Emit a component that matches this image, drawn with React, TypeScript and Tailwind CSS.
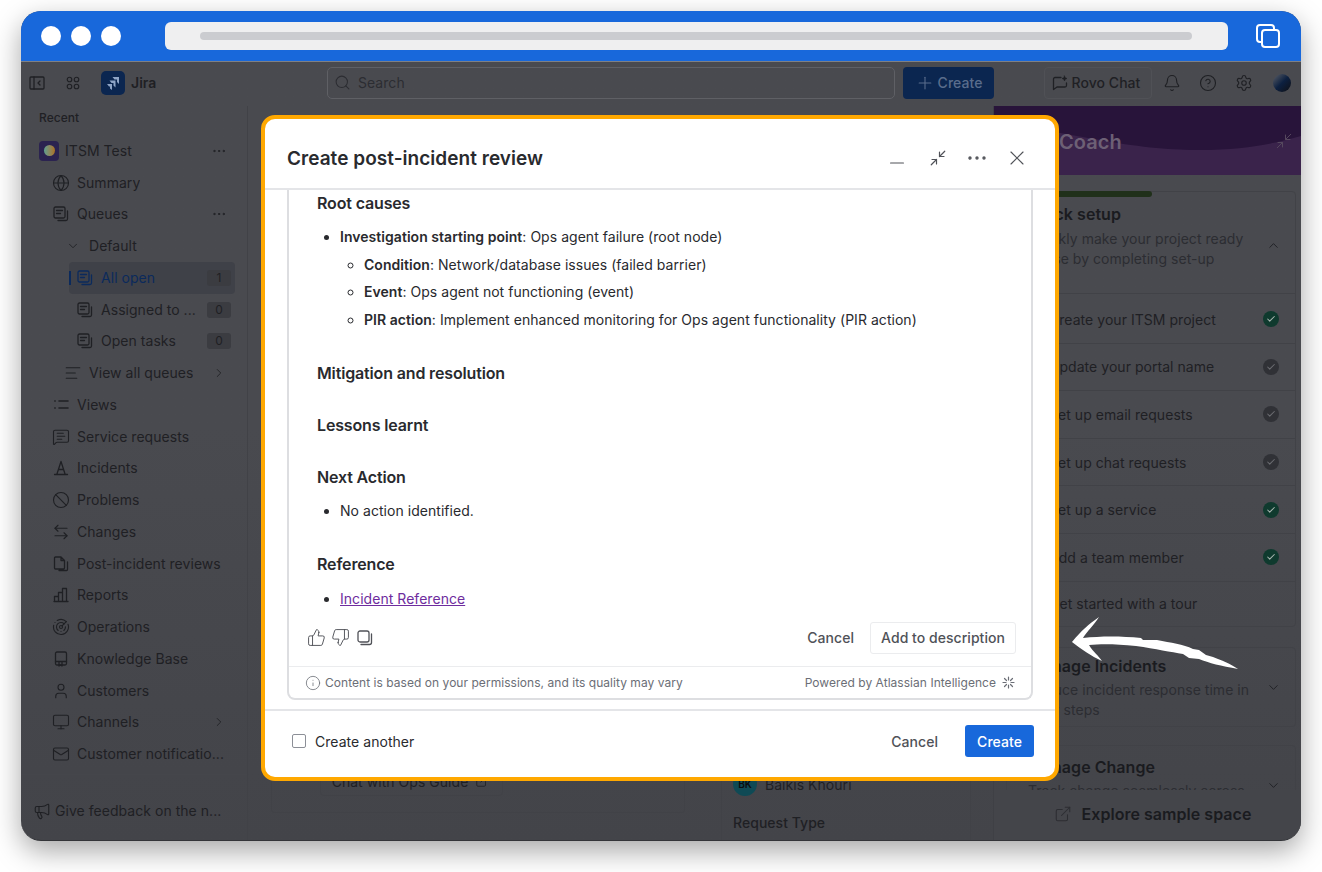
import {
  Ban,
  ArrowLeftRight,
  Bell,
  Check,
  ChevronDown,
  ChevronRight,
  ChevronUp,
  CircleHelp,
  Ellipsis,
  ExternalLink,
  Globe,
  Info,
  Mail,
  Megaphone,
  MessageSquareText,
  Minimize2,
  Minus,
  Monitor,
  Plus,
  Radar,
  Search,
  Settings,
  ThumbsDown,
  ThumbsUp,
  User,
  X,
  AlignLeft,
} from 'lucide-react';
import type { ReactNode } from 'react';

function Glyph({ children, size = 16 }: { children: ReactNode; size?: number }) {
  return (
    <svg
      className="shrink-0"
      width={size}
      height={size}
      viewBox="0 0 16 16"
      fill="none"
      stroke="currentColor"
      strokeWidth="1.3"
      strokeLinecap="round"
      strokeLinejoin="round"
    >
      {children}
    </svg>
  );
}

function QueueIcon() {
  return (
    <Glyph>
      <rect x="1" y="1" width="11" height="11" rx="1.5" />
      <path d="M3.5 4.5h6M3.5 7.5h4M14.5 5v8a1.5 1.5 0 0 1-1.5 1.5H5" />
    </Glyph>
  );
}

function Row({
  icon,
  label,
  indent = 'pl-[17px]',
  right,
  active = false,
}: {
  icon: ReactNode;
  label: string;
  indent?: string;
  right?: ReactNode;
  active?: boolean;
}) {
  return (
    <div className={`relative flex h-[31.75px] items-center ${indent} ${active ? 'text-[#0b2a5c]' : 'text-[#1f2024]'}`}>
      <span className="flex w-[16px] shrink-0 justify-center">{icon}</span>
      <span className="ml-[8px] truncate text-[14px] leading-[20px]">{label}</span>
      {right && <span className="absolute right-[4px] flex items-center">{right}</span>}
    </div>
  );
}

function Count({ n }: { n: number }) {
  return (
    <span className="flex h-[16px] w-[24px] items-center justify-center rounded-[3px] bg-[#3b3c41] text-[12px] text-[#1f2024]">
      {n}
    </span>
  );
}

function Sidebar() {
  const ic = 'size-[18px] shrink-0';
  const more = <ChevronRight className="mr-[5px] size-[14px]" strokeWidth={1.5} />;
  return (
    <aside className="flex h-full w-[227px] shrink-0 flex-col border-r border-[#414247] pl-[15px] pr-[12px]">
      <div className="flex-1">
        <div className="pl-[3px] pt-[5px] text-[12px] font-medium leading-[14px] text-[#1f2024]">Recent</div>
        <div className="mt-[10px]">
          <div className="relative flex h-[31.75px] items-center pl-[3px] text-[#1f2024]">
            <span className="flex size-[20px] items-center justify-center rounded-[4px] bg-[#2b2350]">
              <span className="size-[11px] rounded-full bg-gradient-to-r from-[#5b9d8f] to-[#a9701c]" />
            </span>
            <span className="ml-[6px] text-[14px] leading-[20px]">ITSM Test</span>
            <Ellipsis className="absolute right-[8px] size-[16px]" strokeWidth={1.5} />
          </div>
          <Row icon={<Globe className={ic} strokeWidth={1.5} />} label="Summary" />
          <Row icon={<QueueIcon />} label="Queues" right={<Ellipsis className="mr-[4px] size-[16px]" strokeWidth={1.5} />} />
          <Row icon={<ChevronDown className="size-[14px]" strokeWidth={1.5} />} label="Default" indent="pl-[29px]" />
          <div className="relative ml-[33px] rounded-[4px] bg-[#3f4148]">
            <span className="absolute left-0 top-[9px] h-[14px] w-[2px] bg-[#0b2a5c]" />
            <Row icon={<QueueIcon />} label="All open" indent="pl-[8px]" active right={<Count n={1} />} />
          </div>
          <Row icon={<QueueIcon />} label="Assigned to ..." indent="pl-[41px]" right={<Count n={0} />} />
          <Row icon={<QueueIcon />} label="Open tasks" indent="pl-[41px]" right={<Count n={0} />} />
          <Row icon={<AlignLeft className={ic} strokeWidth={1.5} />} label="View all queues" indent="pl-[29px]" right={more} />
          <Row
            icon={
              <Glyph>
                <path d="M6 4h9M6 11h9M1.8 4h.4M1.8 11h.4" strokeWidth="1.6" />
              </Glyph>
            }
            label="Views"
          />
          <Row icon={<MessageSquareText className={ic} strokeWidth={1.5} />} label="Service requests" />
          <Row
            icon={
              <Glyph>
                <path d="M8 1.5 3.8 14.5M8 1.5l4.2 13M1.5 14.5h13M5.6 9.5h4.8" />
              </Glyph>
            }
            label="Incidents"
          />
          <Row icon={<Ban className={ic} strokeWidth={1.5} />} label="Problems" />
          <Row icon={<ArrowLeftRight className={ic} strokeWidth={1.5} />} label="Changes" />
          <Row
            icon={
              <Glyph>
                <path d="M2.5 1h5.5L11.5 4.5V12a1 1 0 0 1-1 1h-8a1 1 0 0 1-1-1V2a1 1 0 0 1 1-1zM8 1v3.5h3.5M14.5 6v7.5a1 1 0 0 1-1 1H6" />
              </Glyph>
            }
            label="Post-incident reviews"
          />
          <Row
            icon={
              <Glyph>
                <path d="M1.5 14.5v-5h4v5M5.5 14.5v-9h4v9M9.5 14.5v-13h4v13M1 14.5h14" />
              </Glyph>
            }
            label="Reports"
          />
          <Row icon={<Radar className={ic} strokeWidth={1.5} />} label="Operations" />
          <Row
            icon={
              <Glyph>
                <rect x="2.5" y="1" width="11" height="13" rx="1.5" />
                <path d="M2.5 10.5h11M6 10.5v4.5l1.5-1 1.5 1v-4.5" />
              </Glyph>
            }
            label="Knowledge Base"
          />
          <Row icon={<User className={ic} strokeWidth={1.5} />} label="Customers" />
          <Row icon={<Monitor className={ic} strokeWidth={1.5} />} label="Channels" right={more} />
          <Row icon={<Mail className={ic} strokeWidth={1.5} />} label="Customer notificatio..." />
        </div>
      </div>
      <div className="-ml-[15px] -mr-[12px] flex h-[66px] items-center border-t border-[#45464b] pl-[12px] pt-[6px] text-[14px] text-[#1f2024]">
        <Megaphone className="size-[18px] shrink-0" strokeWidth={1.5} />
        <span className="ml-[4px] truncate">Give feedback on the n...</span>
      </div>
    </aside>
  );
}

function Header() {
  const ic = 'size-[18px] shrink-0';
  return (
    <header className="flex h-[45px] shrink-0 items-center border-t border-[#7f8084] pb-[3px] pl-[8px] text-[#1f2024]">
      <Glyph>
        <rect x="1" y="2" width="14" height="12" rx="1" />
        <path d="M5 2v12M11 6 9 8l2 2" />
      </Glyph>
      <span className="ml-[21px]">
        <Glyph size={14}>
          <circle cx="4" cy="4" r="2.6" />
          <circle cx="12" cy="4" r="2.6" />
          <circle cx="4" cy="12" r="2.6" />
          <circle cx="12" cy="12" r="2.6" />
        </Glyph>
      </span>
      <span className="ml-[21px] flex size-[24px] shrink-0 items-center justify-center rounded-[5px] bg-[#0b2650] text-[#8fa5c6]">
        <svg width="14" height="14" viewBox="0 0 14 14" fill="currentColor">
          <path d="M13 1H6.5L8.5 3.5H11V6L13 8ZM9.5 4.5H3.5L5.5 7H7.5V9.5L9.5 11.5ZM6 8H1L3 10.5H4V12.5L6 14Z" />
        </svg>
      </span>
      <span className="ml-[6px] w-[196px] shrink-0 text-[14px] font-semibold">Jira</span>
      <div className="flex h-[32px] w-[568px] shrink-0 items-center rounded-[5px] border border-[#5f6065] pl-[6px] text-[14px] text-[#2c2d32]">
        <Search className="size-[17px]" strokeWidth={1.5} />
        <span className="ml-[7px]">Search</span>
      </div>
      <div className="ml-[8px] flex h-[32px] w-[91px] shrink-0 items-center justify-center rounded-[4px] bg-[#0b2650] text-[14px] font-medium text-[#5a6d8c]">
        <Plus className="mr-[3px] size-[20px]" strokeWidth={1.3} />
        Create
      </div>
      <div className="ml-[50px] flex h-[32px] w-[108px] shrink-0 items-center justify-center rounded-[4px] border border-[#505156] pr-[4px] text-[14px] font-medium">
        <span className="mr-[4px]">
          <Glyph>
            <path d="M9 2.5H3A1.5 1.5 0 0 0 1.5 4v10.5L5 12h8a1.5 1.5 0 0 0 1.5-1.5V8" />
            <path d="M12.5 1l.7 1.8 1.8.7-1.8.7-.7 1.8-.7-1.8-1.8-.7 1.8-.7z" fill="currentColor" strokeWidth="0.6" />
          </Glyph>
        </span>
        Rovo Chat
      </div>
      <Bell className={`ml-[11px] ${ic}`} strokeWidth={1.5} />
      <CircleHelp className={`ml-[18px] ${ic}`} strokeWidth={1.5} />
      <Settings className={`ml-[18px] ${ic}`} strokeWidth={1.5} />
      <span className="ml-[20px] size-[18px] shrink-0 rounded-full bg-gradient-to-br from-[#5f6065] via-[#0c2040] to-[#0f1015]" />
    </header>
  );
}

function ChecklistRow({ label, done }: { label: string; done: boolean }) {
  return (
    <div className="flex h-[47.6px] items-center justify-between border-b border-[#414247] pl-[42px] pr-[16px] text-[14px] text-[#1f2024]">
      <span>{label}</span>
      <span className={`flex size-[16px] items-center justify-center rounded-full ${done ? 'bg-[#0f3a2e]' : 'bg-[#303136]'}`}>
        <Check className={`size-[10px] ${done ? 'text-[#a8b6b0]' : 'text-[#6b6c71]'}`} strokeWidth={2.5} />
      </span>
    </div>
  );
}

function CoachPanel() {
  return (
    <aside className="relative flex h-full w-[308px] shrink-0 flex-col overflow-hidden border-l border-[#3f4045]">
      <div className="relative h-[69px] shrink-0 bg-[#28143a]">
        <svg className="absolute inset-0 h-full w-full" viewBox="0 0 308 69" preserveAspectRatio="none">
          <path d="M0 20C40 20 80 30 107 34C150 42 180 44 207 44C250 44 280 38 308 30V69H0Z" fill="#3a234b" />
        </svg>
        <span className="absolute left-[65px] top-[23px] text-[20px] font-semibold leading-[26px] text-[#6d6075]">Coach</span>
        <Minimize2 className="absolute right-[8px] top-[26px] size-[18px] text-[#56495f]" strokeWidth={1.3} />
      </div>
      <div className="relative flex-1 overflow-hidden pl-[12px] pr-[5px] pt-[16px]">
        <div className="relative rounded-[4px] border border-[#414247]">
          <div className="absolute left-0 top-[-1px] h-[6px] w-[145px] rounded-[3px] bg-[#20301a]" />
          <div className="relative h-[101px] pl-[21px] pt-[12px]">
            <div className="text-[16px] font-semibold leading-[20px] text-[#1a1b1f]">Quick setup</div>
            <div className="mt-[5px] text-[14px] leading-[19.5px] text-[#2c2d32]">
              Quickly make your project ready
              <br />
              to use by completing set-up
            </div>
            <ChevronUp className="absolute right-[14px] top-[46px] size-[15px] text-[#1f2024]" strokeWidth={1.5} />
          </div>
          <div className="border-t border-[#414247] pt-[2px]">
            <ChecklistRow label="Create your ITSM project" done />
            <ChecklistRow label="Update your portal name" done={false} />
            <ChecklistRow label="Set up email requests" done={false} />
            <ChecklistRow label="Set up chat requests" done={false} />
            <ChecklistRow label="Set up a service" done />
            <ChecklistRow label="Add a team member" done />
          </div>
          <div className="flex h-[44px] items-center pl-[42px] text-[14px] text-[#1f2024]">Get started with a tour</div>
        </div>
        <div className="relative mt-[20px] h-[80px] rounded-[4px] border border-[#414247] pl-[21px] pt-[8px]">
          <div className="text-[16px] font-semibold leading-[20px] text-[#1a1b1f]">Manage Incidents</div>
          <div className="mt-[4px] text-[14px] leading-[20px] text-[#2c2d32]">
            Reduce incident response time in
            <br />
            easy steps
          </div>
          <ChevronDown className="absolute right-[14px] top-[32px] size-[15px] text-[#1f2024]" strokeWidth={1.5} />
        </div>
        <div className="relative mt-[18px] h-[80px] rounded-[4px] border border-[#414247] pl-[21px] pt-[11px]">
          <div className="text-[16px] font-semibold leading-[20px] text-[#1a1b1f]">Manage Change</div>
          <div className="mt-[4px] text-[14px] leading-[20px] text-[#2c2d32]">Track change seamlessly across</div>
          <ChevronDown className="absolute right-[14px] top-[32px] size-[15px] text-[#1f2024]" strokeWidth={1.5} />
        </div>
        <div className="absolute bottom-0 left-0 right-0 flex h-[50px] items-center justify-center gap-[10px] bg-[#44454a] pb-[2px] pl-[10px] text-[16px] font-semibold text-[#1a1b1f]">
          <ExternalLink className="size-[18px] text-[#2c2d32]" strokeWidth={1.4} />
          Explore sample space
        </div>
      </div>
    </aside>
  );
}

function MainBehind() {
  return (
    <main className="relative flex flex-1 items-end overflow-hidden">
      <div className="mb-[27px] ml-[23px] h-[60px] w-[414px] rounded-[3px] border border-[#414247] pl-[48px] pt-[12px]">
        <div className="flex h-[30px] w-[183px] items-center justify-center gap-[7px] rounded-[4px] border border-[#414247] pr-[2px] text-[14px] text-[#1f2024]">
          Chat with Ops Guide
          <ExternalLink className="size-[14px]" strokeWidth={1.4} />
        </div>
      </div>
      <div className="ml-[36px] h-[70px] w-[250px] border-x border-[#414247] pl-[11px] pt-[2px] text-[14px] text-[#1f2024]">
        <div className="flex items-center gap-[8px]">
          <span className="flex size-[24px] items-center justify-center rounded-full bg-[#0f4a55] text-[10px] font-semibold text-[#0b0c10]">
            BK
          </span>
          Baikis Khouri
        </div>
        <div className="mt-[17px] font-medium leading-[20px]">Request Type</div>
      </div>
    </main>
  );
}

function ReviewBody() {
  const h = 'text-[16px] font-semibold leading-[20px] tracking-[-0.15px] text-[#292a2e]';
  return (
    <div className="min-h-0 flex-1 overflow-hidden px-[28px] text-[14px] leading-[20px] text-[#292a2e]">
      <div className={`${h} mt-[3px]`}>Root causes</div>
      <ul className="mt-[14px] list-disc pl-[23px]">
        <li>
          <b className="font-semibold">Investigation starting point</b>: Ops agent failure (root node)
          <ul className="list-[circle] pl-[24px]">
            <li className="mt-[7.7px]">
              <b className="font-semibold">Condition</b>: Network/database issues (failed barrier)
            </li>
            <li className="mt-[7.7px]">
              <b className="font-semibold">Event</b>: Ops agent not functioning (event)
            </li>
            <li className="mt-[7.7px]">
              <b className="font-semibold">PIR action</b>: Implement enhanced monitoring for Ops agent functionality (PIR action)
            </li>
          </ul>
        </li>
      </ul>
      <div className={`${h} mt-[33px]`}>Mitigation and resolution</div>
      <div className={`${h} mt-[32px]`}>Lessons learnt</div>
      <div className={`${h} mt-[32px]`}>Next Action</div>
      <ul className="mt-[14px] list-disc pl-[23px]">
        <li>No action identified.</li>
      </ul>
      <div className={`${h} mt-[33px]`}>Reference</div>
      <ul className="mt-[15px] list-disc pl-[23px]">
        <li>
          <span className="text-[#6e2d9e] underline">Incident Reference</span>
        </li>
      </ul>
    </div>
  );
}

function Modal() {
  return (
    <div className="absolute left-[240px] top-[104px] flex h-[666px] w-[798px] flex-col overflow-hidden rounded-[14px] border-[4px] border-[#ffa800] bg-white">
      <div className="flex h-[71px] shrink-0 items-center border-b-2 border-[#e4e5e8] pl-[22px] pr-[26px] pt-[9px] text-[#505258]">
        <h1 className="flex-1 pt-[2px] text-[19px] font-semibold text-[#292a2e]">Create post-incident review</h1>
        <Minus className="mt-[10px] size-[22px] shrink-0" strokeWidth={1.3} />
        <Minimize2 className="ml-[21px] size-[18px] shrink-0" strokeWidth={1.6} />
        <Ellipsis className="ml-[18px] size-[24px] shrink-0" strokeWidth={1.4} />
        <X className="ml-[16px] size-[24px] shrink-0" strokeWidth={1.1} />
      </div>
      <div className="flex min-h-0 flex-1 flex-col px-[22px] pb-[9px]">
        <div className="flex min-h-0 flex-1 flex-col rounded-b-[8px] border-x-2 border-b-2 border-[#dddee1]">
          <ReviewBody />
          <div className="flex h-[50px] shrink-0 items-center pb-[7px] pl-[18px] pr-[15px] text-[#505258]">
            <ThumbsUp className="size-[19px] shrink-0" strokeWidth={1.2} />
            <ThumbsDown className="ml-[5px] size-[19px] shrink-0" strokeWidth={1.2} />
            <span className="ml-[7px]">
              <Glyph>
                <rect x="1" y="1" width="11" height="11" rx="2" />
                <path d="M14.5 4v8.5a2 2 0 0 1-2 2H4" />
              </Glyph>
            </span>
            <span className="ml-auto text-[14px] font-medium">Cancel</span>
            <span className="ml-[16px] flex h-[32px] w-[146px] items-center justify-center rounded-[3px] border border-[#ebecee] text-[14px] font-medium">
              Add to description
            </span>
          </div>
          <div className="flex h-[32px] shrink-0 items-center border-t border-[#ebecee] pl-[16px] pr-[16px] text-[12px] text-[#6b6e76]">
            <Info className="size-[16px] shrink-0" strokeWidth={1.2} />
            <span className="ml-[4px]">Content is based on your permissions, and its quality may vary</span>
            <span className="ml-auto">Powered by Atlassian Intelligence</span>
            <svg className="ml-[6px]" width="13" height="13" viewBox="0 0 13 13" stroke="currentColor" strokeWidth="1.2" strokeLinecap="round">
              <path d="M6.5 1v3M6.5 9v3M1 6.5h3M9 6.5h3M2.5 2.5l2 2M8.5 8.5l2 2M10.5 2.5l-2 2M4.5 8.5l-2 2" />
            </svg>
          </div>
        </div>
      </div>
      <div className="flex h-[68px] shrink-0 items-center border-t-2 border-[#e4e5e8] pb-[6px] pl-[27px] pr-[21px]">
        <span className="size-[14px] rounded-[2px] border border-[#8c8f97]" />
        <span className="ml-[9px] text-[14px] text-[#292a2e]">Create another</span>
        <span className="ml-auto text-[14px] font-medium text-[#505258]">Cancel</span>
        <span className="ml-[27px] flex h-[32px] w-[69px] items-center justify-center rounded-[3px] bg-[#1868db] text-[14px] font-medium text-white">
          Create
        </span>
      </div>
    </div>
  );
}

export default function App() {
  return (
    <div className="h-[872px] w-full overflow-hidden bg-white pl-[21px] pt-[11px] tracking-[0.04px] [font-family:Inter,'Noto_Sans',sans-serif]">
      <div className="relative flex h-[830px] w-[1280px] flex-col overflow-hidden rounded-[20px] border-b border-[#333438] bg-gradient-to-b from-[#494a4f] via-[#494a4f] to-[#434449] shadow-[0_10px_28px_rgba(0,0,0,0.35)]">
        <div className="flex h-[50px] shrink-0 items-center bg-[#1868db] px-[20px]">
          <span className="size-[20px] rounded-full bg-white" />
          <span className="ml-[10px] size-[20px] rounded-full bg-white" />
          <span className="ml-[10px] size-[20px] rounded-full bg-white" />
          <div className="ml-[44px] flex h-[28px] w-[1063px] items-center rounded-[6px] bg-[#efeff0] pl-[35px] pr-[36px]">
            <div className="h-[8px] w-full rounded-full bg-[#cbccd0]" />
          </div>
          <svg className="ml-[28px]" width="24" height="24" viewBox="0 0 24 24" fill="none" stroke="white" strokeWidth="2">
            <rect x="1" y="1" width="17" height="17" rx="3" />
            <rect x="6" y="6" width="17" height="17" rx="3" fill="#1868db" />
          </svg>
        </div>
        <Header />
        <div className="flex min-h-0 flex-1">
          <Sidebar />
          <MainBehind />
          <CoachPanel />
        </div>
        <Modal />
        {/* hand-drawn arrow pointing at the modal */}
        <svg className="absolute left-[1050px] top-[605px]" width="170" height="56" viewBox="0 0 170 56" fill="white">
          <path d="M1 26C10 15 18 8 28 1L26 4C20 12 14 18 12 22C30 20 50 20 70 22L72 24L86 24C100 27 112 28 122 33L128 34L135 39L142 41C150 44 160 48 167 53C150 50 138 47 128 43L118 42L112 38C100 36 85 33 65 30C45 28 30 28 18 29C22 36 28 40 31 45C20 40 10 33 1 26Z" />
        </svg>
      </div>
    </div>
  );
}
